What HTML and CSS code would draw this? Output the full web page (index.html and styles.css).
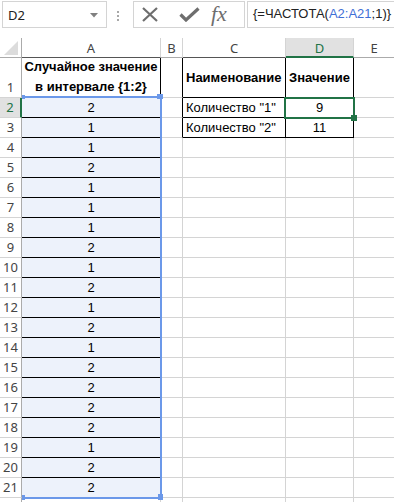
FILE: index.html
```html
<!DOCTYPE html>
<html lang="ru">
<head>
    <meta charset="UTF-8">
    <meta name="viewport" content="width=device-width, initial-scale=1.0">
    <title>ЧАСТОТА</title>
    <link rel="stylesheet" href="styles.css">
</head>
<body>

    <div class="toolbar">
        <div class="namebox">
            <span>D2</span>
            <svg class="dd" width="8" height="5" viewBox="0 0 8 5"><path d="M0 0H8L4 4.5Z" fill="#808080"/></svg>
        </div>
        <div class="grip"><i></i><i></i><i></i></div>
        <div class="btns">
            <svg class="ico-x" width="16" height="15" viewBox="0 0 16 15">
                <path d="M1 1L15 14M15 1L1 14" stroke="#6e6e6e" stroke-width="2.2" fill="none"/>
            </svg>
            <svg class="ico-ok" width="21" height="15" viewBox="0 0 21 15">
                <path d="M1.5 7.5L7 13L19.5 1.5" stroke="#6e6e6e" stroke-width="3.2" fill="none"/>
            </svg>
            <span class="fx">fx</span>
        </div>
        <div class="formula">{=ЧАСТОТА(<span class="ref-text">A2:A21</span>;1)}</div>
    </div>

    <div class="sheet">
        <!-- column headers -->
        <div class="corner">
            <svg width="14" height="14" viewBox="0 0 14 14"><path d="M14 0V14H0Z" fill="#dcdcdc"/></svg>
        </div>
        <div class="hd bk">A</div>
        <div class="hd">B</div>
        <div class="hd bk">C</div>
        <div class="hd sel">D</div>
        <div class="hd">E</div>

        <!-- row 1 -->
        <div class="rn">1</div>
        <div class="c head-a"><b>Случайное значение<br>в интервале {1:2}</b></div>
        <div class="c bl"></div>
        <div class="c t mid left"><b>Наименование</b></div>
        <div class="c t mid"><b>Значение</b></div>
        <div class="c"></div>

        <!-- row 2 -->
        <div class="rn sel">2</div>
        <div class="c va">2</div>
        <div class="c bl"></div>
        <div class="c t left">Количество "1"</div>
        <div class="c t">9</div>
        <div class="c"></div>

        <!-- row 3 -->
        <div class="rn">3</div>
        <div class="c va">1</div>
        <div class="c bl"></div>
        <div class="c t left">Количество "2"</div>
        <div class="c t">11</div>
        <div class="c"></div>

        <div class="rn">4</div><div class="c va">1</div><div class="c"></div><div class="c"></div><div class="c"></div><div class="c"></div>
        <div class="rn">5</div><div class="c va">2</div><div class="c"></div><div class="c"></div><div class="c"></div><div class="c"></div>
        <div class="rn">6</div><div class="c va">1</div><div class="c"></div><div class="c"></div><div class="c"></div><div class="c"></div>
        <div class="rn">7</div><div class="c va">1</div><div class="c"></div><div class="c"></div><div class="c"></div><div class="c"></div>
        <div class="rn">8</div><div class="c va">1</div><div class="c"></div><div class="c"></div><div class="c"></div><div class="c"></div>
        <div class="rn">9</div><div class="c va">2</div><div class="c"></div><div class="c"></div><div class="c"></div><div class="c"></div>
        <div class="rn">10</div><div class="c va">1</div><div class="c"></div><div class="c"></div><div class="c"></div><div class="c"></div>
        <div class="rn">11</div><div class="c va">2</div><div class="c"></div><div class="c"></div><div class="c"></div><div class="c"></div>
        <div class="rn">12</div><div class="c va">1</div><div class="c"></div><div class="c"></div><div class="c"></div><div class="c"></div>
        <div class="rn">13</div><div class="c va">2</div><div class="c"></div><div class="c"></div><div class="c"></div><div class="c"></div>
        <div class="rn">14</div><div class="c va">1</div><div class="c"></div><div class="c"></div><div class="c"></div><div class="c"></div>
        <div class="rn">15</div><div class="c va">2</div><div class="c"></div><div class="c"></div><div class="c"></div><div class="c"></div>
        <div class="rn">16</div><div class="c va">2</div><div class="c"></div><div class="c"></div><div class="c"></div><div class="c"></div>
        <div class="rn">17</div><div class="c va">2</div><div class="c"></div><div class="c"></div><div class="c"></div><div class="c"></div>
        <div class="rn">18</div><div class="c va">2</div><div class="c"></div><div class="c"></div><div class="c"></div><div class="c"></div>
        <div class="rn">19</div><div class="c va">1</div><div class="c"></div><div class="c"></div><div class="c"></div><div class="c"></div>
        <div class="rn">20</div><div class="c va">2</div><div class="c"></div><div class="c"></div><div class="c"></div><div class="c"></div>
        <div class="rn">21</div><div class="c va">2</div><div class="c"></div><div class="c"></div><div class="c"></div><div class="c"></div>
        <div class="rn"></div><div class="c"></div><div class="c"></div><div class="c"></div><div class="c"></div><div class="c"></div>

        <!-- formula reference highlight A2:A21 -->
        <div class="ref-box"></div>
        <div class="ref-h h-tl"></div>
        <div class="ref-h h-tr"></div>
        <div class="ref-h h-bl"></div>
        <div class="ref-h h-br"></div>

        <!-- active cell D2 -->
        <div class="active"></div>
        <div class="active-h"></div>
    </div>

</body>
</html>
```

FILE: styles.css
```css
body {
    margin: 0;
    background-color: #fff;
    font-family: "Liberation Sans", Arial, sans-serif;
    font-size: 13px;
    color: #000;
    overflow: hidden;
}

/* ---------- formula bar ---------- */

.toolbar {
    display: flex;
    align-items: flex-start;
    height: 38px;
    padding-top: 1px;
    box-sizing: border-box;
}

.namebox {
    display: flex;
    align-items: center;
    justify-content: space-between;
    width: 105px;
    height: 27px;
    margin-left: 2px;
    padding: 0 8px 0 5px;
    box-sizing: border-box;
    border: 1px solid #d4d4d4;
    font-family: "Noto Sans", sans-serif;
    font-size: 13px;
    color: #222;
}

.dd {
    margin-top: 1px;
}

.grip {
    display: flex;
    flex-direction: column;
    gap: 2px;
    margin: 10px 0 0 10px;
}

.grip i {
    display: block;
    width: 2px;
    height: 2px;
    background-color: #a8a8a8;
}

.btns {
    display: flex;
    align-items: center;
    width: 112px;
    height: 27px;
    margin-left: 14px;
    padding-left: 8px;
    box-sizing: border-box;
    border: 1px solid #d4d4d4;
}

.ico-ok {
    margin-left: 21px;
}

.fx {
    margin-left: 11px;
    font-family: "Liberation Serif", serif;
    font-style: italic;
    font-size: 22px;
    line-height: 20px;
    color: #6e6e6e;
    margin-top: -2px;
}

.formula {
    flex: 1;
    height: 27px;
    margin-left: 2px;
    padding-left: 5px;
    box-sizing: border-box;
    border: 1px solid #d4d4d4;
    border-right: none;
    line-height: 24px;
    color: #222;
    white-space: nowrap;
    overflow: hidden;
}

.ref-text {
    color: #3f6fd6;
}

/* ---------- sheet ---------- */

.sheet {
    position: relative;
    display: grid;
    grid-template-columns: 22px 139px 22px 103px 68px 41px;
    grid-template-rows: 20px 40px;
    grid-auto-rows: 20px;
}

.sheet > div {
    box-sizing: border-box;
}

.corner {
    display: flex;
    align-items: flex-end;
    justify-content: flex-end;
    padding: 0 3px 2px 0;
    border-right: 1px solid #ababab;
    border-bottom: 1px solid #ababab;
}

.hd {
    display: flex;
    align-items: center;
    justify-content: center;
    border-right: 1px solid #d4d4d4;
    border-bottom: 1px solid #ababab;
    font-family: "Noto Sans", sans-serif;
    font-size: 13px;
    color: #444;
    padding-top: 1px;
}

.hd.bk {
    border-bottom-color: #555;
}

.hd.sel {
    background-color: #e1e1e1;
    color: #217346;
    border-bottom: 2px solid #217346;
}

.rn {
    display: flex;
    align-items: flex-end;
    justify-content: center;
    border-right: 1px solid #ababab;
    border-bottom: 1px solid #d4d4d4;
    font-family: "Noto Sans", sans-serif;
    font-size: 13px;
    line-height: 19px;
    color: #444;
}

.rn.sel {
    background-color: #e1e1e1;
    color: #217346;
    border-right: 2px solid #217346;
}

.c {
    display: flex;
    align-items: flex-end;
    justify-content: center;
    border-right: 1px solid #d4d4d4;
    border-bottom: 1px solid #d4d4d4;
    line-height: 19px;
    white-space: nowrap;
    overflow: hidden;
}

.head-a {
    text-align: center;
    line-height: 20px;
    border-right-color: #000;
    border-bottom-color: #000;
}

.va {
    background-color: #edf2fb;
    border-right-color: #000;
    border-bottom-color: #000;
}

.bl {
    border-right-color: #000;
}

.t {
    border-right-color: #000;
    border-bottom-color: #000;
}

.mid {
    align-items: center;
}

.left {
    justify-content: flex-start;
    padding-left: 3px;
}

/* reference highlight */

.ref-box {
    position: absolute;
    left: 22px;
    top: 58px;
    width: 140px;
    height: 403px;
    border: 2px solid #6b98e9;
    border-left: none;
}

.ref-h {
    position: absolute;
    background-color: #6b98e9;
}

.h-tl { left: 22px; top: 57px; width: 3px; height: 4px; }
.h-tr { left: 157px; top: 56px; width: 6px; height: 5px; }
.h-bl { left: 22px; top: 457px; width: 3px; height: 5px; }
.h-br { left: 158px; top: 456px; width: 5px; height: 6px; }

/* active cell */

.active {
    position: absolute;
    left: 284px;
    top: 59px;
    width: 71px;
    height: 22px;
    border: 2px solid #217346;
}

.active-h {
    position: absolute;
    left: 351px;
    top: 77px;
    width: 6px;
    height: 6px;
    background-color: #217346;
}
```
